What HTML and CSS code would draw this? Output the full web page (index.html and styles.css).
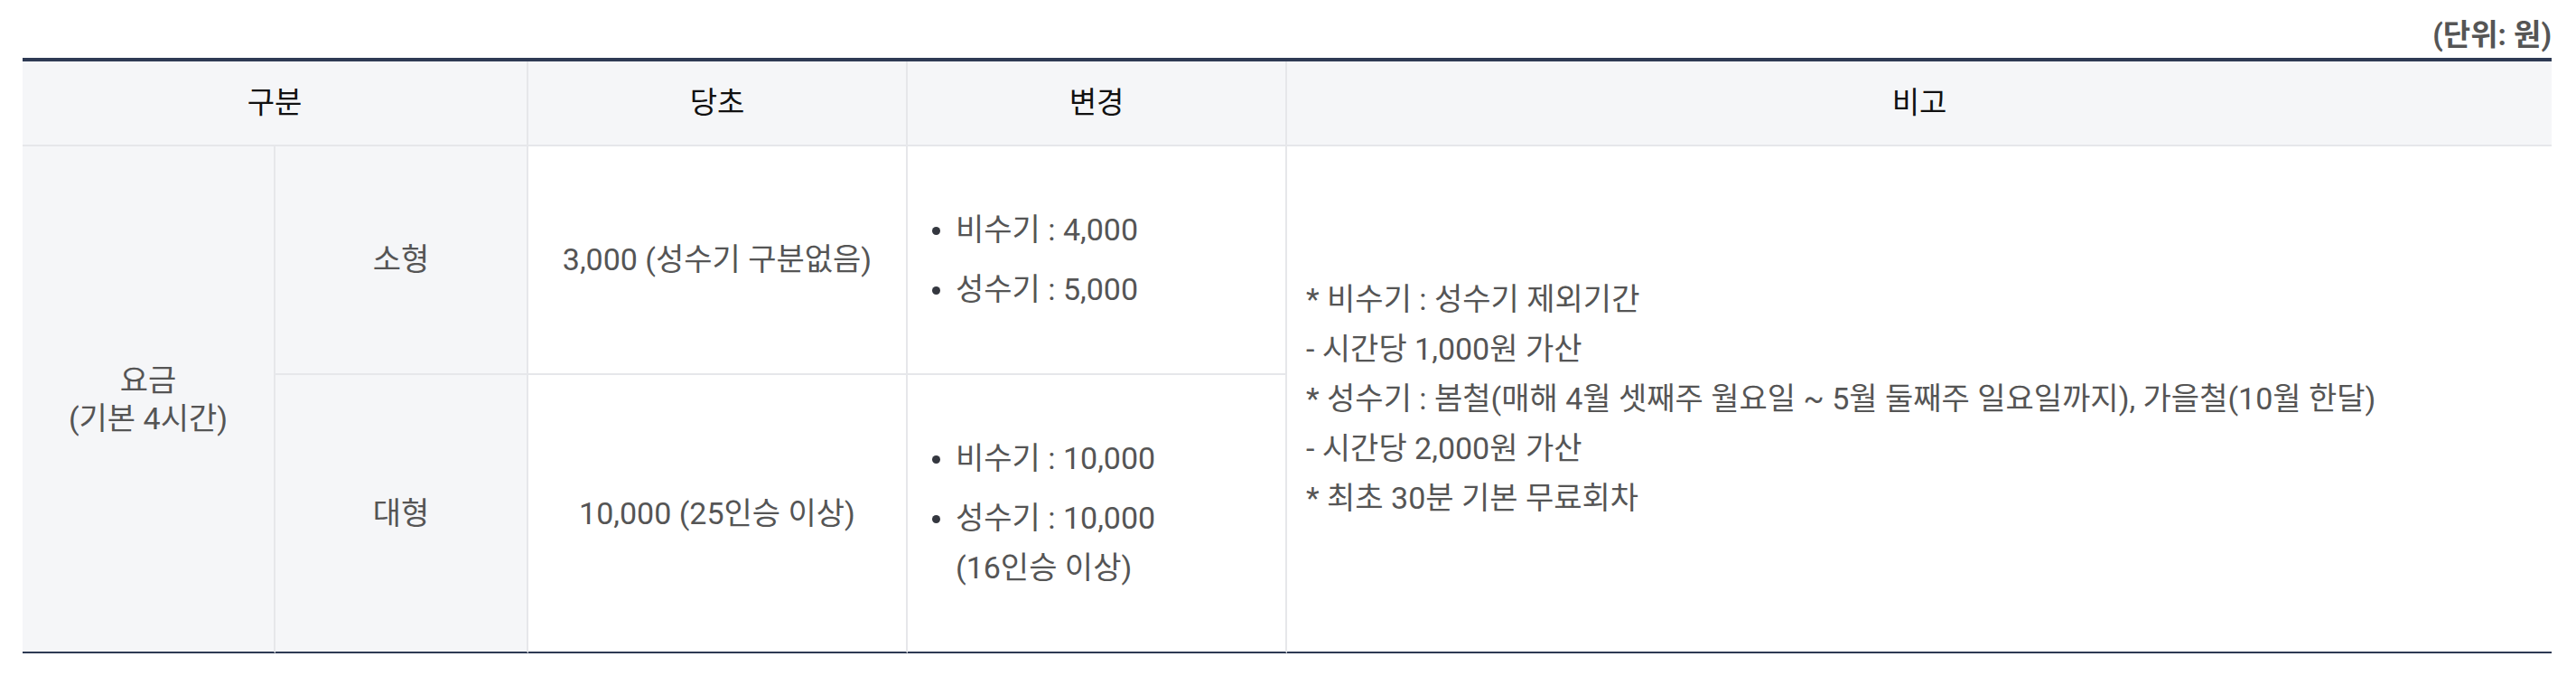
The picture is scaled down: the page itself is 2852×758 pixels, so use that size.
FILE: index.html
```html
<!DOCTYPE html>
<html lang="ko">
<head>
<meta charset="utf-8">
<title>요금표</title>
<link rel="stylesheet" href="styles.css">
</head>
<body>
<div class="wrap">
  <p class="unit">(단위: 원)</p>
  <table class="fee">
    <colgroup>
      <col class="c-narrow"><col class="c-narrow"><col class="c-mid"><col class="c-mid"><col class="c-wide">
    </colgroup>
    <thead>
      <tr>
        <th colspan="2">구분</th>
        <th>당초</th>
        <th>변경</th>
        <th class="last">비고</th>
      </tr>
    </thead>
    <tbody>
      <tr>
        <th rowspan="2" class="rh multi end">요금<br>(기본 4시간)</th>
        <th class="rh">소형</th>
        <td>3,000 (성수기 구분없음)</td>
        <td class="list">
          <ul>
            <li>비수기 : 4,000</li>
            <li>성수기 : 5,000</li>
          </ul>
        </td>
        <td rowspan="2" class="note last end">
          <div>* 비수기 : 성수기 제외기간</div>
          <div>- 시간당 1,000원 가산</div>
          <div>* 성수기 : 봄철(매해 4월 셋째주 월요일 ~ 5월 둘째주 일요일까지), 가을철(10월 한달)</div>
          <div>- 시간당 2,000원 가산</div>
          <div>* 최초 30분 기본 무료회차</div>
        </td>
      </tr>
      <tr>
        <th class="rh end">대형</th>
        <td class="end">10,000 (25인승 이상)</td>
        <td class="list end">
          <ul>
            <li>비수기 : 10,000</li>
            <li><span>성수기 : 10,000<br>(16인승 이상)</span></li>
          </ul>
        </td>
      </tr>
    </tbody>
  </table>
</div>
</body>
</html>
```

FILE: styles.css
```css
html, body {
  margin: 0;
  padding: 0;
  background: #ffffff;
}

body {
  font-family: Roboto, "Noto Sans CJK KR", sans-serif;
  color: #555555;
}

.wrap {
  padding: 16px 27px 0 25px;
}

.unit {
  margin: 0 0 3px;
  text-align: right;
  font-size: 33px;
  line-height: 45px;
  font-weight: 700;
  color: #555555;
}

.fee {
  width: 100%;
  table-layout: fixed;
  border-collapse: separate;
  border-spacing: 0;
  border-top: 4px solid #2e3a54;
}

.c-narrow { width: 10%; }
.c-mid { width: 15%; }
.c-wide { width: 50%; }

.fee thead th {
  background: #f5f6f8;
  color: #111111;
  font-size: 33px;
  font-weight: 400;
  line-height: 46px;
  padding: 23px 10px;
  text-align: center;
  border-right: 2px solid #e6e7ea;
  border-bottom: 2px solid #e6e7ea;
}

.fee tbody th,
.fee tbody td {
  font-size: 34px;
  font-weight: 400;
  color: #555555;
  line-height: 55px;
  text-align: center;
  vertical-align: middle;
  padding: 65px 24px;
  border-right: 2px solid #e6e7ea;
  border-bottom: 2px solid #e6e7ea;
}

.fee tbody th {
  background: #f5f6f8;
}

.fee .rh.multi {
  line-height: 42px;
}

.fee .last {
  border-right: none;
}

.fee tbody .end {
  border-bottom-color: #2e3a54;
}

.fee td.list {
  text-align: left;
}

.list ul {
  margin: 0;
  padding: 0;
  list-style: none;
}

.list li {
  display: flex;
}

.list li + li {
  margin-top: 11px;
}

.list li::before {
  content: "";
  flex: none;
  width: 9px;
  height: 9px;
  border-radius: 50%;
  background: #34373f;
  margin: 24px 17px 0 3px;
}

.fee td.note {
  text-align: left;
  padding: 20px 20px 20px 21px;
}
```
